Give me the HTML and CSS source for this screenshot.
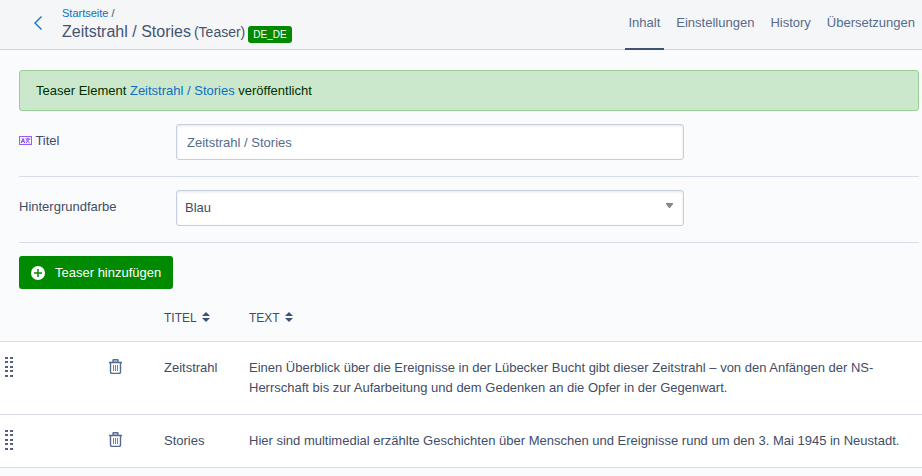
FILE: index.html
```html
<!DOCTYPE html>
<html lang="de">
<head>
    <meta charset="UTF-8">
    <meta name="viewport" content="width=device-width, initial-scale=1.0">
    <title>Zeitstrahl / Stories (Teaser)</title>
    <link rel="stylesheet" href="styles.css">
</head>
<body>
    <svg class="sprite" aria-hidden="true">
        <symbol id="icon-trash" viewBox="0 0 13 15">
            <path d="M4 3V1.5q0-1 1-1h3q1 0 1 1V3z" fill="#b8c2d2"/>
            <path d="M0 3.5h13M4 3V1.5q0-1 1-1h3q1 0 1 1V3M1.5 4v9q0 1.5 1.5 1.5h7q1.5 0 1.5-1.5V4" fill="none" stroke="#566b8d" stroke-width="1.4"/>
            <path d="M4.5 6v6M6.500 6v6M8.500 6v6" stroke="#6f82a3"/>
        </symbol>
        <symbol id="icon-sort" viewBox="0 0 8 10">
            <path d="M4 0l4 4H0zM4 10L0 6h8z" fill="#3f5175"/>
        </symbol>
        <symbol id="icon-drag" viewBox="0 0 8 20">
            <path d="M0 0h3v2H0zM5 0h3v2H5zM0 4h3v2H0zM5 4h3v2H5zM0 9h3v2H0zM5 9h3v2H5zM0 13h3v2H0zM5 13h3v2H5zM0 18h3v2H0zM5 18h3v2H5z" fill="#55617b"/>
        </symbol>
    </svg>

    <header class="header">
        <a class="back" href="#" aria-label="Zurück">
            <svg width="8" height="14" viewBox="0 0 8 14"><path d="M7.5.5L1 7l6.5 6.5" fill="none" stroke="#0b6ec5" stroke-width="1.3"/></svg>
        </a>
        <div class="heading">
            <nav class="breadcrumb"><a href="#">Startseite</a> /</nav>
            <h1>Zeitstrahl / Stories <small>(Teaser)</small> <span class="badge">DE_DE</span></h1>
        </div>
        <nav class="tabs">
            <a class="active" href="#">Inhalt</a>
            <a href="#">Einstellungen</a>
            <a href="#">History</a>
            <a href="#">Übersetzungen</a>
        </nav>
    </header>

    <main>
        <div class="content">
            <div class="alert">Teaser Element <a href="#">Zeitstrahl / Stories</a> veröffentlicht</div>

            <div class="field">
                <label for="titel">
                    <svg width="13" height="9" viewBox="0 0 13 9">
                        <rect x=".5" y=".5" width="12" height="8" fill="#f3edff" stroke="#9560f5"/>
                        <path d="M2.300 7l1.700-4.500L5.700 7M3 5.500h2M6.500 3h4.500M8.800 1.800V3M7 7l3.300-4M7.300 4l3.200 3" fill="none" stroke="#8447ff"/>
                    </svg>
                    Titel
                </label>
                <input class="control" type="text" id="titel" value="Zeitstrahl / Stories">
            </div>

            <div class="field">
                <label for="farbe">Hintergrundfarbe</label>
                <div class="select">
                    <select class="control" id="farbe">
                        <option>Blau</option>
                    </select>
                    <svg width="7" height="5" viewBox="0 0 7 5"><path d="M0 0h7v1L4 5H3L0 1z" fill="#888"/></svg>
                </div>
            </div>

            <button class="add-btn" type="button">
                <svg width="14" height="14" viewBox="0 0 14 14"><circle cx="7" cy="7" r="7" fill="#fff"/><path d="M7 3v8M3 7h8" stroke="#008a00" stroke-width="1.5"/></svg>
                Teaser hinzufügen
            </button>
        </div>

        <table>
            <thead>
                <tr>
                    <td class="col-drag"></td>
                    <td class="col-action"></td>
                    <th class="col-title" scope="col"><a href="#">TITEL <svg class="sort"><use href="#icon-sort"/></svg></a></th>
                    <th scope="col"><a href="#">TEXT <svg class="sort"><use href="#icon-sort"/></svg></a></th>
                </tr>
            </thead>
            <tbody>
                <tr>
                    <td class="col-drag"><svg class="drag"><use href="#icon-drag"/></svg></td>
                    <td class="col-action"><button type="button" aria-label="Löschen"><svg class="trash"><use href="#icon-trash"/></svg></button></td>
                    <td>Zeitstrahl</td>
                    <td>Einen Überblick über die Ereignisse in der Lübecker Bucht gibt dieser Zeitstrahl – von den Anfängen der NS-Herrschaft bis zur Aufarbeitung und dem Gedenken an die Opfer in der Gegenwart.</td>
                </tr>
                <tr>
                    <td class="col-drag"><svg class="drag"><use href="#icon-drag"/></svg></td>
                    <td class="col-action"><button type="button" aria-label="Löschen"><svg class="trash"><use href="#icon-trash"/></svg></button></td>
                    <td>Stories</td>
                    <td>Hier sind multimedial erzählte Geschichten über Menschen und Ereignisse rund um den 3. Mai 1945 in Neustadt.</td>
                </tr>
            </tbody>
        </table>
    </main>
</body>
</html>
```

FILE: styles.css
```css
* {
    box-sizing: border-box;
}

body {
    margin: 0;
    font-family: "Liberation Sans", Arial, sans-serif;
    font-size: 13px;
    line-height: 20px;
    color: #3f4d67;
    background-color: #fafbfd;
}

a {
    color: #0b6ec5;
    text-decoration: none;
}

.sprite {
    display: none;
}

.header {
    display: flex;
    height: 50px;
    background-color: #f5f6f8;
    border-bottom: 1px solid #cfd6e0;
}

.back {
    display: flex;
    align-items: center;
    padding: 0 20px 4px 34px;
}

.heading {
    flex: 1;
    padding-top: 6px;
}

.breadcrumb {
    font-size: 11px;
    line-height: 15px;
}

h1 {
    display: flex;
    align-items: center;
    gap: 3px;
    margin: 0;
    font-size: 16px;
    font-weight: normal;
    line-height: 20px;
    color: #44546f;
}

h1 small {
    font-size: 14px;
}

.badge {
    margin-top: 5px;
    padding: 0 5px;
    border-radius: 3px;
    background-color: #008a00;
    color: #fff;
    font-size: 10px;
    line-height: 17px;
}

.tabs {
    display: flex;
    gap: 8px;
    padding-right: 3px;
}

.tabs a {
    height: 50px;
    padding: 13px 4px 0;
    color: #566b8d;
    border-bottom: 2px solid transparent;
}

.tabs .active {
    border-color: #3f5175;
}

.content {
    padding: 20px 3px 0 19px;
}

.alert {
    padding: 10px 16px 9px;
    border: 1px solid #97cf97;
    border-radius: 3px;
    background-color: #cce8cc;
    color: #002f00;
}

.field {
    display: flex;
    padding: 13px 0 16px;
    border-bottom: 1px solid #d8dde9;
}

.field label {
    flex: 0 0 157px;
    padding-top: 7px;
}

.control {
    width: 100%;
    max-width: 508px;
    height: 36px;
    border: 1px solid #c7cfde;
    border-radius: 3px;
    background-color: #fff;
    box-shadow: inset 0 1px 3px rgba(0,0,0,0.1);
    font: inherit;
}

input.control {
    padding: 0 10px;
    color: #566b8d;
}

.select {
    position: relative;
    width: 100%;
    max-width: 508px;
}

select.control {
    display: block;
    padding: 0 8px;
    appearance: none;
    color: #3f4d67;
}

.select svg {
    position: absolute;
    right: 11px;
    top: 13px;
    pointer-events: none;
}

.add-btn {
    display: flex;
    align-items: center;
    gap: 10px;
    height: 33px;
    margin-top: 13px;
    padding: 0 12px;
    border: none;
    border-radius: 3px;
    background-color: #008a00;
    color: #fff;
    font: inherit;
    cursor: pointer;
}

table {
    width: 100%;
    border-collapse: collapse;
}

th, td {
    padding: 16px 15px 16px 16px;
    border-bottom: 1px solid #d8dbe9;
    text-align: left;
    vertical-align: top;
    font-weight: normal;
}

th {
    padding-top: 19px;
    padding-bottom: 13px;
    font-size: 12px;
}

th a {
    color: #3f4d67;
    white-space: nowrap;
}

tbody tr {
    background-color: #fff;
}

.col-drag {
    width: 91px;
    padding: 15px 0 0 5px;
}

.col-action {
    width: 57px;
    padding: 17px 0 0 18px;
}

.col-title {
    width: 85px;
}

.col-action button {
    display: block;
    padding: 0;
    border: none;
    background: none;
    cursor: pointer;
}

.drag, .trash {
    display: block;
}

.drag {
    width: 8px;
    height: 20px;
}

.trash {
    width: 13px;
    height: 15px;
}

.sort {
    width: 8px;
    height: 10px;
    margin-left: 2px;
}
```
